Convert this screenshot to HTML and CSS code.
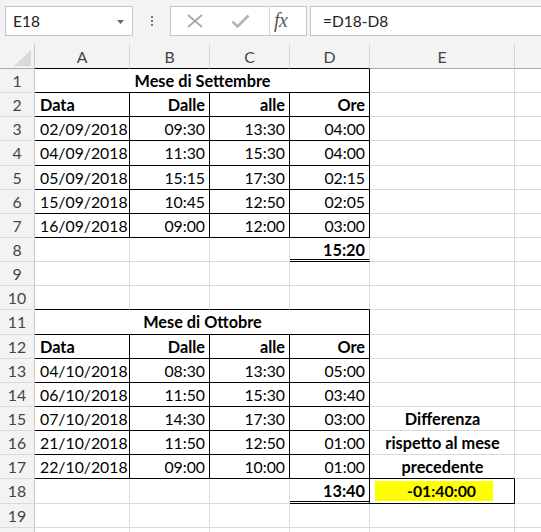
FILE: index.html
```html
<!DOCTYPE html>
<html>
<head>
<meta charset="utf-8">
<link rel="stylesheet" href="styles.css">
</head>
<body>
<div class="toolbar">
  <div class="namebox">
    <span class="name">E18</span>
    <svg class="caret" width="7" height="4" viewBox="0 0 7 4"><path d="M0 0H7L3.5 4Z" fill="#666"/></svg>
  </div>
  <div class="dots"><i></i><i></i><i></i></div>
  <div class="fnbox">
    <svg class="ico-x" width="18" height="14" viewBox="0 0 18 14"><path d="M2 1L16 13M16 1L2 13" stroke="#a8a8a8" stroke-width="1.8" fill="none"/></svg>
    <svg class="ico-check" width="19" height="14" viewBox="0 0 19 14"><path d="M1.5 7.5L6.5 12.5L17.5 1.5" stroke="#b4b4b4" stroke-width="2.6" fill="none"/></svg>
    <span class="fx">fx</span>
  </div>
  <div class="formula">=D18-D8</div>
</div>
<div class="sheet">
  <div class="corner"><svg width="18" height="16" viewBox="0 0 18 16"><path d="M17 0V16H0Z" fill="#d9d9d9"/></svg></div>
  <div class="ch tb">A</div><div class="ch tb">B</div><div class="ch tb">C</div><div class="ch tb">D</div><div class="ch">E</div><div class="ch last"></div>

  <div class="rh">1</div>
  <div class="c span4 bb br bold center">Mese di Settembre</div><div class="c"></div><div class="c"></div>

  <div class="rh">2</div>
  <div class="c bb br bold">Data</div><div class="c bb br bold right">Dalle</div><div class="c bb br bold right">alle</div><div class="c bb br bold right">Ore</div><div class="c"></div><div class="c"></div>

  <div class="rh">3</div>
  <div class="c bb br">02/09/2018</div><div class="c bb br right">09:30</div><div class="c bb br right">13:30</div><div class="c bb br right">04:00</div><div class="c"></div><div class="c"></div>

  <div class="rh">4</div>
  <div class="c bb br">04/09/2018</div><div class="c bb br right">11:30</div><div class="c bb br right">15:30</div><div class="c bb br right">04:00</div><div class="c"></div><div class="c"></div>

  <div class="rh">5</div>
  <div class="c bb br">05/09/2018</div><div class="c bb br right">15:15</div><div class="c bb br right">17:30</div><div class="c bb br right">02:15</div><div class="c"></div><div class="c"></div>

  <div class="rh">6</div>
  <div class="c bb br">15/09/2018</div><div class="c bb br right">10:45</div><div class="c bb br right">12:50</div><div class="c bb br right">02:05</div><div class="c"></div><div class="c"></div>

  <div class="rh">7</div>
  <div class="c bb br">16/09/2018</div><div class="c bb br right">09:00</div><div class="c bb br right">12:00</div><div class="c bb br right">03:00</div><div class="c"></div><div class="c"></div>

  <div class="rh">8</div>
  <div class="c"></div><div class="c"></div><div class="c"></div><div class="c dbl bold right">15:20</div><div class="c"></div><div class="c"></div>

  <div class="rh">9</div>
  <div class="c"></div><div class="c"></div><div class="c"></div><div class="c"></div><div class="c"></div><div class="c"></div>

  <div class="rh">10</div>
  <div class="c bb"></div><div class="c bb"></div><div class="c bb"></div><div class="c bb"></div><div class="c"></div><div class="c"></div>

  <div class="rh">11</div>
  <div class="c span4 bb br bold center">Mese di Ottobre</div><div class="c"></div><div class="c"></div>

  <div class="rh">12</div>
  <div class="c bb br bold">Data</div><div class="c bb br bold right">Dalle</div><div class="c bb br bold right">alle</div><div class="c bb br bold right">Ore</div><div class="c"></div><div class="c"></div>

  <div class="rh">13</div>
  <div class="c bb br">04/10/2018</div><div class="c bb br right">08:30</div><div class="c bb br right">13:30</div><div class="c bb br right">05:00</div><div class="c"></div><div class="c"></div>

  <div class="rh">14</div>
  <div class="c bb br">06/10/2018</div><div class="c bb br right">11:50</div><div class="c bb br right">15:30</div><div class="c bb br right">03:40</div><div class="c"></div><div class="c"></div>

  <div class="rh">15</div>
  <div class="c bb br">07/10/2018</div><div class="c bb br right">14:30</div><div class="c bb br right">17:30</div><div class="c bb br right">03:00</div><div class="c bold center">Differenza</div><div class="c"></div>

  <div class="rh">16</div>
  <div class="c bb br">21/10/2018</div><div class="c bb br right">11:50</div><div class="c bb br right">12:50</div><div class="c bb br right">01:00</div><div class="c bold center">rispetto al mese</div><div class="c"></div>

  <div class="rh">17</div>
  <div class="c bb br">22/10/2018</div><div class="c bb br right">09:00</div><div class="c bb br right">10:00</div><div class="c bb br right">01:00</div><div class="c bb bold center">precedente</div><div class="c"></div>

  <div class="rh">18</div>
  <div class="c"></div><div class="c"></div><div class="c"></div><div class="c dbl br bold right">13:40</div><div class="c bb br result"><span class="hl">-01:40:00</span></div><div class="c"></div>

  <div class="rh">19</div>
  <div class="c"></div><div class="c"></div><div class="c"></div><div class="c"></div><div class="c"></div><div class="c"></div>

  <div class="rh"></div>
  <div class="c"></div><div class="c"></div><div class="c"></div><div class="c"></div><div class="c"></div><div class="c"></div>
</div>
</body>
</html>
```

FILE: styles.css
```css
html, body {
  margin: 0;
  padding: 0;
  width: 541px;
  height: 532px;
  overflow: hidden;
  background: #ffffff;
  font-family: "Lato", "Open Sans", sans-serif;
}

.toolbar {
  height: 44px;
  background: #f3f3f3;
  display: flex;
  align-items: flex-start;
  box-sizing: border-box;
  padding-top: 6px;
}

.namebox {
  margin-left: 5px;
  width: 128px;
  height: 30px;
  box-sizing: border-box;
  border: 1px solid #c6c6c6;
  background: #fff;
  display: flex;
  align-items: center;
  justify-content: space-between;
  padding: 0 8px 0 7px;
  font-size: 15.5px;
  color: #222;
}

.caret { margin-top: 1px; }

.dots {
  width: 37px;
  height: 30px;
  display: flex;
  flex-direction: column;
  align-items: center;
  justify-content: center;
  gap: 2px;
}
.dots i {
  display: block;
  width: 2px;
  height: 2px;
  background: #777;
}

.fnbox {
  width: 137px;
  height: 30px;
  box-sizing: border-box;
  border: 1px solid #c6c6c6;
  background: #fff;
  display: flex;
  align-items: center;
}
.ico-x { margin-left: 15px; }
.ico-check { margin-left: 27px; }
.fx {
  margin-left: 19px;
  padding-left: 4px;
  border-left: 1px solid #d6d6d6;
  height: 28px;
  line-height: 27px;
  font-family: "Liberation Serif", "DejaVu Serif", serif;
  font-style: italic;
  font-size: 20px;
  color: #5a5a5a;
  letter-spacing: -0.5px;
  box-sizing: border-box;
  width: 36px;
}

.formula {
  margin-left: 3px;
  flex: 1;
  height: 30px;
  box-sizing: border-box;
  border: 1px solid #c6c6c6;
  border-right: none;
  background: #fff;
  padding-left: 12px;
  display: flex;
  align-items: center;
  font-size: 15.5px;
  color: #222;
}

.sheet {
  display: grid;
  grid-template-columns: 35px 95px 80px 80px 80px 145px 40px;
  grid-template-rows: 25px repeat(20, 24.15px);
  font-size: 15.8px;
  color: #000;
}

.corner {
  background: #f3f3f3;
  border-right: 1px solid #c8c8c8;
  border-bottom: 1px solid #ababab;
  box-sizing: border-box;
  display: flex;
  align-items: flex-end;
  justify-content: flex-end;
  padding: 0 2px 2px 0;
}

.ch {
  background: #f3f3f3;
  box-sizing: border-box;
  border-right: 1px solid #d5d5d5;
  border-bottom: 1px solid #ababab;
  display: flex;
  align-items: center;
  justify-content: center;
  color: #444;
  font-size: 15.8px;
}
.ch.tb { border-bottom-color: #000; }
.ch.last { border-right: none; }

.rh {
  background: #f3f3f3;
  box-sizing: border-box;
  border-right: 1px solid #c8c8c8;
  border-bottom: 1px solid #dadada;
  display: flex;
  align-items: center;
  justify-content: center;
  color: #444;
  font-size: 15.8px;
}

.c {
  box-sizing: border-box;
  border-right: 1px solid #d9d9d9;
  border-bottom: 1px solid #d9d9d9;
  display: flex;
  align-items: center;
  padding: 0 4px 0 5px;
  white-space: nowrap;
  overflow: hidden;
}
.c.bb { border-bottom-color: #000; }
.c.br { border-right-color: #000; }
.c.dbl { border-bottom: 3px double #000; padding-top: 2px; }
.c.span4 { grid-column: span 4; }
.bold { font-weight: 700; font-size: 16.3px; }
.right { justify-content: flex-end; }
.center { justify-content: center; }

.result {
  align-items: flex-end;
  padding: 0 0 2px 5px;
}
.hl {
  display: flex;
  align-items: center;
  background: #ffff00;
  width: 118px;
  height: 20px;
  padding-left: 32px;
  box-sizing: border-box;
  font-weight: 700;
}
```
